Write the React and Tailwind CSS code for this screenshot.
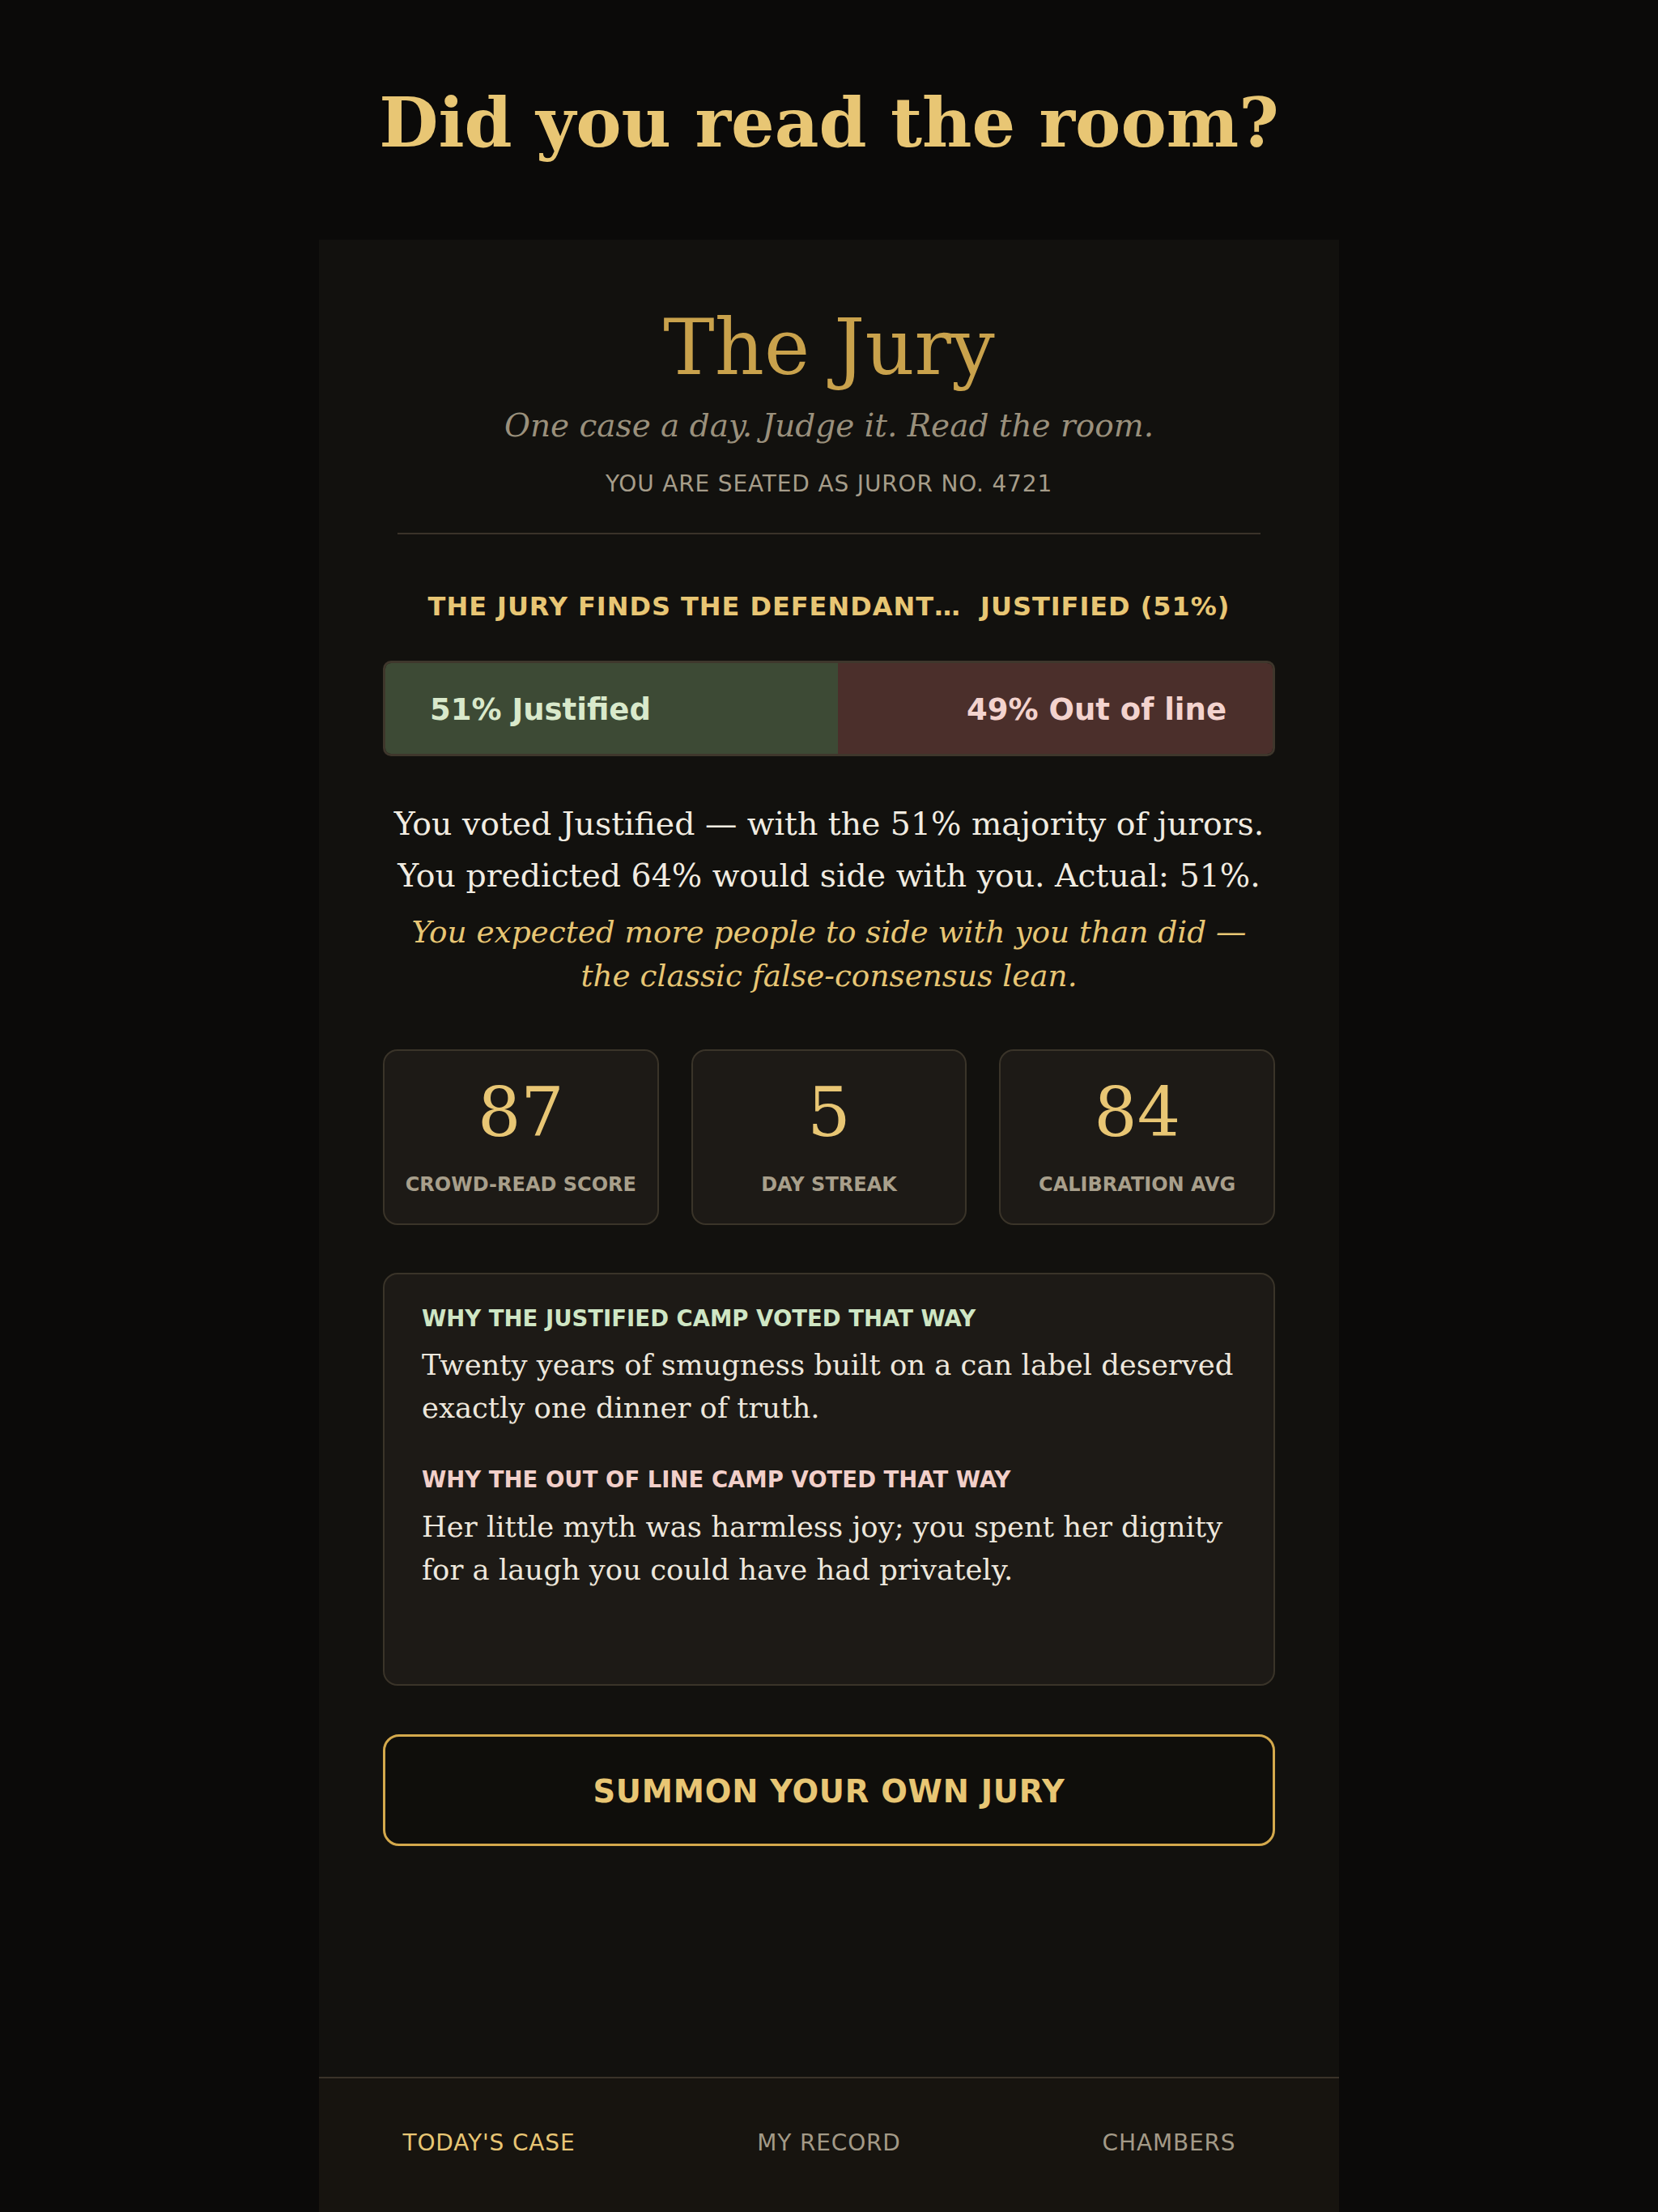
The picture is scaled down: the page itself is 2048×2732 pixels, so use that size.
const serif = "font-['DejaVu_Serif','Liberation_Serif',serif]";
const sans = "font-['DejaVu_Sans','Liberation_Sans',sans-serif]";

const stats = [
  { value: "87", label: "CROWD-READ SCORE" },
  { value: "5", label: "DAY STREAK" },
  { value: "84", label: "CALIBRATION AVG" },
];

const tabs = [
  { label: "TODAY'S CASE", active: true },
  { label: "MY RECORD", active: false },
  { label: "CHAMBERS", active: false },
];

const StatCard = ({ value, label }) => (
  <div className="rounded-[18px] border-2 border-[#3a3429] bg-[#1d1a16] pt-[28px] pb-[32px] text-center">
    <div className={`${serif} text-[84px] leading-[96px] text-[#e8c674]`}>{value}</div>
    <div className={`${sans} mt-[25px] text-[24px] leading-[32px] font-bold text-[#a89f8b]`}>{label}</div>
  </div>
);

export default function App() {
  return (
    <div className="min-h-screen bg-[#0b0a09] flex flex-col items-center">
      <h1 className={`${serif} pt-[104px] pb-[96px] text-[84.5px] leading-[96px] font-bold text-[#e8c674]`}>
        Did you read the room?
      </h1>

      <div className="w-[1260px] flex-1 flex flex-col bg-[#12110e]">
        <div className="px-[79px] pt-[75px]">
          <header className="text-center">
            <div className={`${serif} text-[95px] leading-[116px] text-[#c9a24c]`}>The Jury</div>
            <p className={`${serif} mt-[11px] text-[39px] leading-[56px] italic text-[#9a907c]`}>
              One case a day. Judge it. Read the room.
            </p>
            <p className={`${sans} mt-[24px] text-[28px] leading-[40px] tracking-[0.03em] text-[#a69d8a]`}>
              YOU ARE SEATED AS JUROR NO. 4721
            </p>
            <div className="mx-[18px] mt-[40px] h-[2px] bg-[#3a3329]" />
          </header>

          <p className={`${sans} mt-[67px] text-center text-[32px] leading-[44px] font-bold tracking-[0.03em] text-[#e8c674]`}>
            THE JURY FINDS THE DEFENDANT…&nbsp; JUSTIFIED (51%)
          </p>

          <div className={`${sans} mt-[45px] flex h-[118px] overflow-hidden rounded-[10px] border-[3px] border-[#3f372c] text-[37px] font-bold`}>
            <div className="flex w-[51%] items-center bg-[#3d4a35] pl-[55px] pt-[4px] text-[#d9e9cb]">51% Justified</div>
            <div className="flex flex-1 items-center justify-end bg-[#4b2f2b] pr-[57px] pt-[4px] text-[#f3d3ce]">49% Out of line</div>
          </div>

          <div className={`${serif} mt-[51px] text-center`}>
            <p className="text-[39.4px] leading-[64px] text-[#f1ece1]">
              You voted Justified — with the 51% majority of jurors.
              <br />
              You predicted 64% would side with you. Actual: 51%.
            </p>
            <p className="mx-auto mt-[11px] max-w-[1060px] text-[37.4px] leading-[54px] italic text-[#e8c674]">
              You expected more people to side with you than did — the classic false-consensus lean.
            </p>
          </div>

          <div className="mt-[64px] grid grid-cols-3 gap-[40px]">
            {stats.map((s) => (
              <StatCard key={s.label} {...s} />
            ))}
          </div>

          <div className="mt-[59px] h-[510px] rounded-[18px] border-2 border-[#3a3429] bg-[#1d1a16] px-[46px] pt-[36px]">
            <h3 className={`${sans} text-[27.5px] leading-[36px] font-bold text-[#cfe6c4]`}>
              WHY THE JUSTIFIED CAMP VOTED THAT WAY
            </h3>
            <p className={`${serif} mt-[13px] text-[35.4px] leading-[53px] text-[#ede7dc]`}>
              Twenty years of smugness built on a can label deserved exactly one dinner of truth.
            </p>
            <h3 className={`${sans} mt-[44px] text-[27.5px] leading-[36px] font-bold text-[#f2cfc9]`}>
              WHY THE OUT OF LINE CAMP VOTED THAT WAY
            </h3>
            <p className={`${serif} mt-[14px] text-[35.4px] leading-[53px] text-[#ede7dc]`}>
              Her little myth was harmless joy; you spent her dignity for a laugh you could have had privately.
            </p>
          </div>

          <button className={`${sans} mt-[60px] h-[138px] w-full rounded-[20px] border-[3px] border-[#d4a94c] bg-[#0f0e0b] pt-[4px] text-[38.4px] font-bold tracking-[0.02em] text-[#e8c674]`}>
            SUMMON YOUR OWN JURY
          </button>
        </div>

        <nav className={`${sans} mt-auto grid h-[167px] grid-cols-3 border-t-2 border-[#3a3329] bg-[#17140f] pt-[60px] text-center text-[28px] leading-[40px] tracking-[0.03em]`}>
          {tabs.map((t) => (
            <span key={t.label} className={t.active ? "text-[#e8c674]" : "text-[#a39a87]"}>
              {t.label}
            </span>
          ))}
        </nav>
      </div>
    </div>
  );
}
